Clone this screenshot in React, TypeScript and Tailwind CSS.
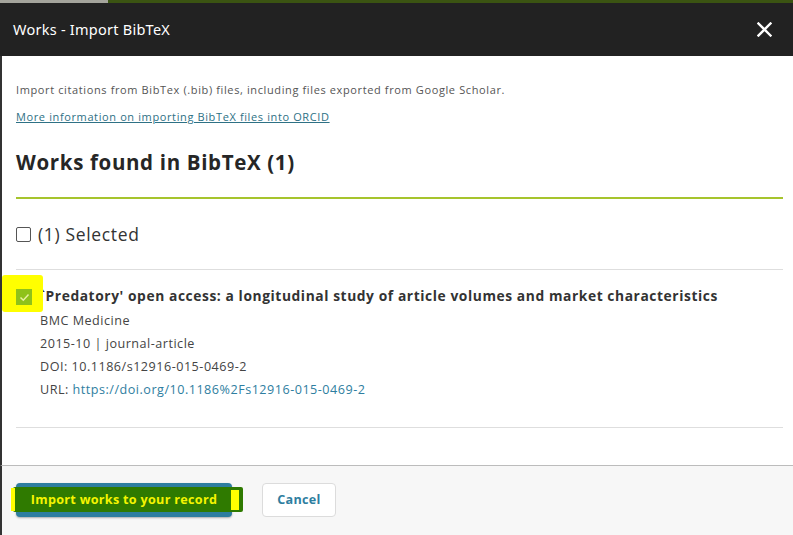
import React from 'react';

const CloseIcon = () => (
  <svg width="15" height="15" viewBox="0 0 15 15" fill="none">
    <path d="M1.5 1.5 L13.5 13.5 M13.5 1.5 L1.5 13.5" stroke="white" strokeWidth="2.4" strokeLinecap="square" />
  </svg>
);

const App = () => {
  return (
    <div className="w-[793px] h-[535px] bg-white overflow-hidden flex flex-col font-['Open_Sans','Noto_Sans',sans-serif]">
      {/* strip of the page behind the dialog */}
      <div className="flex h-[3px] shrink-0">
        <div className="w-[108px] bg-[#a4a49c]" />
        <div className="flex-1 bg-[#3b5412]" />
      </div>

      {/* Header */}
      <div className="h-[53px] shrink-0 bg-[#222222] flex items-center justify-between pl-[13px] pr-[21px]">
        <h2 className="text-white text-[14.5px] tracking-[0.25px] font-['Noto_Sans',sans-serif]">Works - Import BibTeX</h2>
        <CloseIcon />
      </div>

      {/* Body */}
      <div className="flex-1 border-l-2 border-[#333] px-[14px] pr-[10px]">
        <p className="mt-[26px] text-[11px] tracking-[0.62px] leading-[16px] text-[#555]">
          Import citations from BibTex (.bib) files, including files exported from Google Scholar.
        </p>
        <a href="#" className="block mt-[11px] text-[11px] tracking-[0.62px] leading-[16px] text-[#2e7185] underline">
          More information on importing BibTeX files into ORCID
        </a>
        <h3 className="mt-[23px] text-[20.5px] tracking-[0.65px] font-bold leading-[28px] text-[#262626]">Works found in BibTeX (1)</h3>
        <div className="mt-[21px] h-[2px] bg-[#a6c42d]" />

        <label className="flex items-center gap-[7px] mt-[23px] h-[24px]">
          <span className="w-[15px] h-[15px] border border-[#555] rounded-[2px] bg-white" />
          <span className="text-[17.5px] tracking-[0.65px] text-[#333]">(1) Selected</span>
        </label>
        <div className="mt-[23px] h-px bg-[#dedede]" />

        <div className="relative flex gap-[8px] mt-[16px]">
          {/* highlighter mark */}
          <div className="absolute left-[-14px] top-[-11px] w-[41px] h-[37px] bg-[#ffff00] rounded-[3px]" />
          <span className="relative mt-[3px] w-[16px] h-[16px] bg-[#8fc21a] flex items-center justify-center shrink-0">
            <svg width="11" height="9" viewBox="0 0 11 9" fill="none">
              <path d="M1.5 4.5 L4.3 7.2 L9.5 1.5" stroke="#e8f0a0" strokeWidth="1.5" />
            </svg>
          </span>
          <div className="text-[#444]">
            <div className="text-[13.8px] tracking-[0.58px] font-bold leading-[20px] text-[#333] whitespace-nowrap">
              `Predatory' open access: a longitudinal study of article volumes and market characteristics
            </div>
            <div className="text-[12.6px] tracking-[0.5px] leading-[23px] mt-[3px]">
              <div>BMC Medicine</div>
              <div>2015-10 | journal-article</div>
              <div>DOI: 10.1186/s12916-015-0469-2</div>
              <div>
                URL: <a href="#" className="text-[#2e7ea0]">https://doi.org/10.1186%2Fs12916-015-0469-2</a>
              </div>
            </div>
          </div>
        </div>
        <div className="mt-[26px] h-px bg-[#dedede]" />
      </div>

      {/* Footer */}
      <div className="h-[70px] shrink-0 border-t border-[#bcbcbc] border-l-2 border-l-[#333] bg-[#f7f7f7] flex items-center gap-[30px] pl-[14px] pb-[1px]">
        <button className="relative w-[216px] h-[34px] rounded-[4px] bg-[#2e7ea0] shadow-[0_1px_2px_rgba(0,0,0,0.3)] flex items-center justify-center">
          <span className="absolute left-[-3px] top-[4px] w-[230px] h-[25px] bg-[#2f7a00] rounded-[2px]" />
          <span className="absolute right-[-7px] top-[7px] w-[8px] h-[20px] bg-[#ffff00]" />
          <span className="absolute left-[-5px] top-[5px] w-[4px] h-[23px] bg-[#ffff00]" />
          <span className="relative text-[12.6px] tracking-[0.3px] font-bold text-[#f5f500]">Import works to your record</span>
        </button>
        <button className="w-[74px] h-[34px] rounded-[4px] border border-[#dcdcdc] bg-white text-[12.6px] tracking-[0.3px] font-bold text-[#2e7ea0]">
          Cancel
        </button>
      </div>
    </div>
  );
};

export default App;
